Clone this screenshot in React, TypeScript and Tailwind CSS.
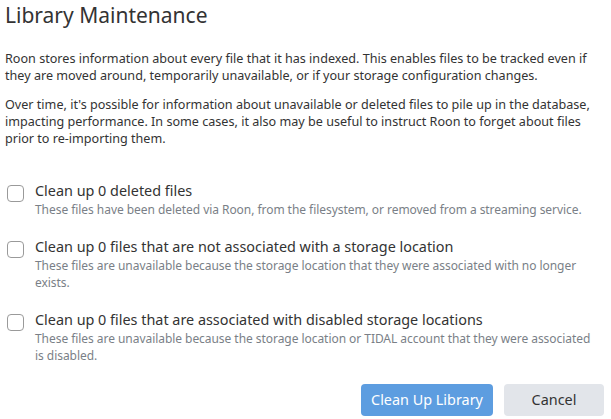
const rows = [
  {
    label: "Clean up 0 deleted files",
    desc: "These files have been deleted via Roon, from the filesystem, or removed from a streaming service.",
  },
  {
    label: "Clean up 0 files that are not associated with a storage location",
    desc: "These files are unavailable because the storage location that they were associated with no longer exists.",
  },
  {
    label: "Clean up 0 files that are associated with disabled storage locations",
    desc: "These files are unavailable because the storage location or TIDAL account that they were associated is disabled.",
  },
];

export default function App() {
  return (
    <div className="w-[611px] h-[419px] bg-white font-['Noto_Sans',sans-serif] text-[#333] overflow-hidden">
      <h1 className="pl-[5px] text-[21px] leading-[30px] text-[#333]">Library Maintenance</h1>

      <div className="px-[5px] mt-[20px] text-[12.6px] leading-[17px] text-[#333]">
        <p>
          Roon stores information about every file that it has indexed. This enables files to be tracked even if
          they are moved around, temporarily unavailable, or if your storage configuration changes.
        </p>
        <p className="mt-[12px]">
          Over time, it's possible for information about unavailable or deleted files to pile up in the database,
          impacting performance. In some cases, it also may be useful to instruct Roon to forget about files
          prior to re-importing them.
        </p>
      </div>

      <div className="mt-[34px] flex flex-col gap-[19px]">
        {rows.map((r) => (
          <label key={r.label} className="flex items-start pl-[7px] pr-[20px]">
            <span className="mt-[4px] w-[17px] h-[17px] shrink-0 rounded-[4px] border border-[#9a9a9a] bg-white" />
            <span className="ml-[11px] flex flex-col">
              <span className="text-[14.4px] leading-[20px] text-[#333]">{r.label}</span>
              <span className="text-[12px] leading-[17px] text-[#7a7f87] tracking-[-0.05px]">{r.desc}</span>
            </span>
          </label>
        ))}
      </div>

      <div className="mt-[20px] flex justify-end gap-[11px] pr-[7px]">
        <button className="w-[132px] h-[32px] rounded-[4px] bg-[#5d9de0] text-white text-[14.4px]">
          Clean Up Library
        </button>
        <button className="w-[100px] h-[32px] rounded-[4px] bg-[#e2e5ea] text-[#333] text-[14.4px]">
          Cancel
        </button>
      </div>
    </div>
  );
}
